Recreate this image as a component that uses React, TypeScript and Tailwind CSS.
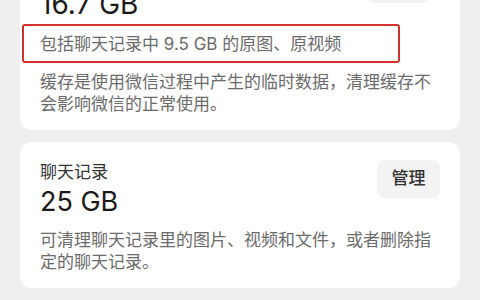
const font = { fontFamily: '"Inter", "Noto Sans CJK SC", sans-serif' };

export default function App(): JSX.Element {
  return (
    <div className="h-[300px] w-[480px] overflow-hidden bg-[#efefef]" style={font}>
      <div className="-mt-[53px] flex flex-col gap-3 px-5">
        <div className="rounded-xl bg-white px-5 pb-[15px] pt-[18px]">
          <div className="flex items-end justify-between">
            <div className="text-[28px] font-normal leading-[34px] text-[#1a1a1a]">16.7 GB</div>
            <div className="mb-[18px] mr-[10px] h-[38px] w-[63px] rounded-lg bg-[#f3f3f3]" />
          </div>
          <div className="-ml-[18px] mt-[3px] flex h-[39px] w-[378px] items-center rounded-[3px] border-2 border-[#d2322d] pl-4 text-[17px] leading-[22px] text-[#6b6b6b]">
            包括聊天记录中 9.5 GB 的原图、原视频
          </div>
          <p className="mt-2 text-[17px] leading-[22px] text-[#6b6b6b]">
            缓存是使用微信过程中产生的临时数据，清理缓存不会影响微信的正常使用。
          </p>
        </div>
        <div className="rounded-xl bg-white px-5 pb-[15px] pt-[18px]">
          <div className="flex items-start justify-between">
            <div>
              <div className="text-[17px] leading-[24px] text-[#333]">聊天记录</div>
              <div className="mt-px text-[27px] leading-[34px] text-[#1a1a1a]">25 GB</div>
            </div>
            <div className="flex h-[38px] w-[63px] items-center justify-center rounded-lg bg-[#f3f3f3] text-[17px] font-medium text-[#333]">
              管理
            </div>
          </div>
          <p className="mt-[10px] text-[17px] leading-[22px] text-[#6b6b6b]">
            可清理聊天记录里的图片、视频和文件，或者删除指定的聊天记录。
          </p>
        </div>
      </div>
    </div>
  );
}
